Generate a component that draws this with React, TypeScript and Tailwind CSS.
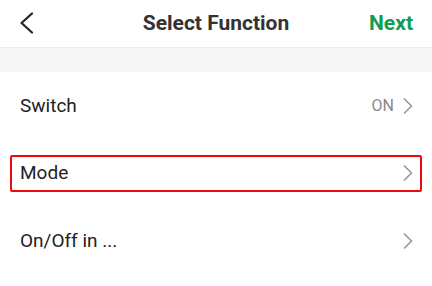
const rows = [
  { label: "Switch", value: "ON", selected: false },
  { label: "Mode", value: "", selected: true },
  { label: "On/Off in ...", value: "", selected: false },
];

function BackArrow() {
  return (
    <svg width="14" height="22" viewBox="0 0 14 22" fill="none" className="mt-[-2px]">
      <polyline
        points="12,1.5 1.5,11 12,20.5"
        stroke="#222"
        strokeWidth="2.2"
        strokeLinecap="round"
        strokeLinejoin="round"
      />
    </svg>
  );
}

function Chevron() {
  return (
    <svg width="10" height="16" viewBox="0 0 10 16" fill="none">
      <polyline
        points="1.5,1 8.5,8 1.5,15"
        stroke="#9a9a9a"
        strokeWidth="1.7"
        strokeLinecap="round"
        strokeLinejoin="round"
      />
    </svg>
  );
}

export default function App() {
  return (
    <div className="w-[432px] h-[286px] bg-white font-['Roboto',sans-serif] overflow-hidden">
      <header className="relative flex h-12 items-center justify-between border-b border-[#ececec] pl-5 pr-[19px]">
        <BackArrow />
        <h1 className="absolute left-1/2 -translate-x-1/2 text-[21px] font-bold text-[#333]">
          Select Function
        </h1>
        <button className="text-[21px] font-bold text-[#0f9d50]">Next</button>
      </header>
      <div className="h-6 bg-[#f6f6f6]" />
      <ul>
        {rows.map((row) => (
          <li key={row.label} className="h-[67.5px] px-[10px] flex items-center">
            <div
              className={
                "flex h-[37px] w-full items-center justify-between rounded-[2px] " +
                (row.selected
                  ? "border-2 border-[#ee0a0a] pl-[8px] pr-[7px]"
                  : "pl-[10px] pr-[9px]")
              }
            >
              <span className="text-[19px] text-[#222]">{row.label}</span>
              <span className="flex items-center gap-[9px] text-[16px] text-[#888]">
                {row.value}
                <Chevron />
              </span>
            </div>
          </li>
        ))}
      </ul>
    </div>
  );
}
